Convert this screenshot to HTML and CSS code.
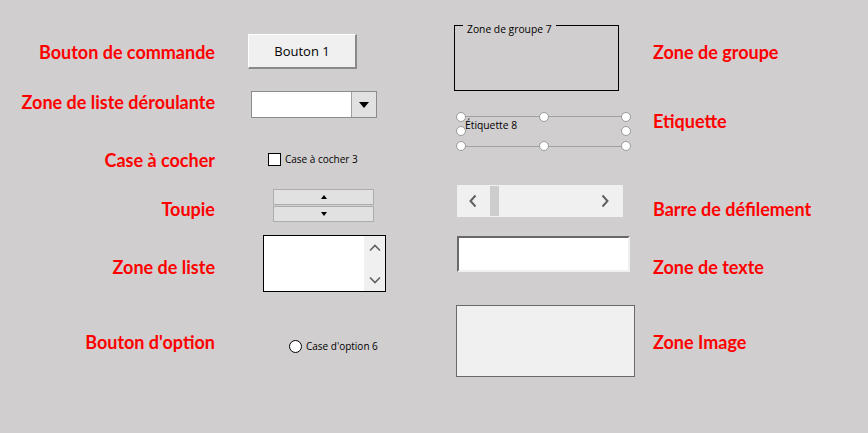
FILE: index.html
```html
<!DOCTYPE html>
<html>
<head>
<meta charset="utf-8">
<title>Contrôles de formulaire</title>
<link rel="stylesheet" href="styles.css">
</head>
<body>
<div class="sheet">
	<!-- libellés de gauche -->
	<div class="col col_left">
		<div class="lbl l1">Bouton de commande</div>
		<div class="lbl l2">Zone de liste déroulante</div>
		<div class="lbl l3">Case à cocher</div>
		<div class="lbl l4">Toupie</div>
		<div class="lbl l5">Zone de liste</div>
		<div class="lbl l6">Bouton d'option</div>
	</div>

	<!-- contrôles colonne 1 -->
	<div class="col col_ctrl1">
		<div class="btn_cmd">Bouton 1</div>
		<div class="combo">
			<div class="combo_field"></div>
			<div class="combo_btn"><span class="tri_down"></span></div>
		</div>
		<div class="check">
			<span class="check_box"></span>
			<span class="ctl_txt">Case à cocher 3</span>
		</div>
		<div class="spin">
			<div class="spin_btn"><span class="tri_up_s"></span></div>
			<div class="spin_btn"><span class="tri_down_s"></span></div>
		</div>
		<div class="listbox">
			<div class="listbox_area"></div>
			<div class="vscroll">
				<svg width="12" height="8" viewBox="0 0 12 8"><path d="M1 6.5 L6 1.5 L11 6.5" fill="none" stroke="#606060" stroke-width="1.6"/></svg>
				<svg width="12" height="8" viewBox="0 0 12 8"><path d="M1 1.5 L6 6.5 L11 1.5" fill="none" stroke="#606060" stroke-width="1.6"/></svg>
			</div>
		</div>
		<div class="option">
			<span class="radio"></span>
			<span class="ctl_txt">Case d'option 6</span>
		</div>
	</div>

	<!-- contrôles colonne 2 -->
	<div class="col col_ctrl2">
		<div class="groupbox"><span class="legend">Zone de groupe 7</span></div>
		<div class="label_ctl">
			<span class="lab_txt">Étiquette 8</span>
			<span class="hdl h_tl"></span>
			<span class="hdl h_tm"></span>
			<span class="hdl h_tr"></span>
			<span class="hdl h_ml"></span>
			<span class="hdl h_mr"></span>
			<span class="hdl h_bl"></span>
			<span class="hdl h_bm"></span>
			<span class="hdl h_br"></span>
		</div>
		<div class="hscroll">
			<svg width="10" height="14" viewBox="0 0 10 14"><path d="M7.5 1.5 L2.5 7 L7.5 12.5" fill="none" stroke="#606060" stroke-width="2"/></svg>
			<div class="hthumb"></div>
			<div class="hspace"></div>
			<svg width="10" height="14" viewBox="0 0 10 14"><path d="M2.5 1.5 L7.5 7 L2.5 12.5" fill="none" stroke="#606060" stroke-width="2"/></svg>
		</div>
		<div class="textbox"></div>
		<div class="imagebox"></div>
	</div>

	<!-- libellés de droite -->
	<div class="col col_right">
		<div class="lbl r1">Zone de groupe</div>
		<div class="lbl r2">Etiquette</div>
		<div class="lbl r3">Barre de défilement</div>
		<div class="lbl r4">Zone de texte</div>
		<div class="lbl r5">Zone Image</div>
	</div>
</div>
</body>
</html>
```

FILE: styles.css
```css
html, body {
	margin: 0;
	padding: 0;
	background: #D0CECE;
}
body {
	width: 868px;
	height: 433px;
	overflow: hidden;
	font-family: "Open Sans", "Noto Sans", sans-serif;
}
.sheet {
	display: flex;
	align-items: flex-start;
}
.col {
	display: flex;
	flex-direction: column;
	align-items: flex-start;
}

/* ---------- libellés rouges ---------- */
.lbl {
	color: #FF0000;
	font-family: Lato, "Open Sans", sans-serif;
	font-weight: bold;
	font-size: 18px;
	line-height: 20px;
	height: 20px;
	white-space: nowrap;
}
.col_left {
	width: 215px;
	align-items: flex-end;
	padding-top: 42px;
}
.l2 { margin-top: 30px; }
.l3 { margin-top: 38px; }
.l4 { margin-top: 29px; }
.l5 { margin-top: 38px; }
.l6 { margin-top: 55px; }

.col_right {
	padding-top: 42px;
	padding-left: 18px;
}
.r2 { margin-top: 49px; }
.r3 { margin-top: 68px; }
.r4 { margin-top: 38px; }
.r5 { margin-top: 55px; }

.ctl_txt {
	font-size: 10px;
	color: #000;
	white-space: nowrap;
}

/* ---------- colonne contrôles 1 ---------- */
.col_ctrl1 {
	width: 239px;
	padding-top: 34px;
}
.btn_cmd {
	margin-left: 33px;
	width: 106px;
	height: 32px;
	background: #F0F0F0;
	border-top: 1px solid #FFFFFF;
	border-left: 1px solid #FFFFFF;
	border-right: 2px solid #8A8A8A;
	border-bottom: 2px solid #8A8A8A;
	font-size: 13px;
	line-height: 32px;
	text-align: center;
}
.combo {
	margin-top: 22px;
	margin-left: 36px;
	width: 124px;
	height: 25px;
	display: flex;
	border: 1px solid #8C8C8C;
	background: #FFFFFF;
}
.combo_field {
	flex: 1;
}
.combo_btn {
	width: 24px;
	background: #E1E1E1;
	border-left: 1px solid #A0A0A0;
	display: flex;
	align-items: center;
	justify-content: center;
}
.tri_down {
	width: 0;
	height: 0;
	border-left: 5px solid transparent;
	border-right: 5px solid transparent;
	border-top: 6px solid #000;
}
.check {
	margin-top: 34px;
	margin-left: 53px;
	display: flex;
	align-items: center;
	gap: 4px;
	height: 14px;
}
.check_box {
	width: 11px;
	height: 11px;
	background: #FFFFFF;
	border: 1px solid #000;
}
.spin {
	margin-top: 23px;
	margin-left: 58px;
	width: 101px;
	display: flex;
	flex-direction: column;
	gap: 1px;
}
.spin_btn {
	height: 14px;
	background: #E1E1E1;
	border: 1px solid #ADADAD;
	display: flex;
	align-items: center;
	justify-content: center;
}
.tri_up_s, .tri_down_s {
	width: 0;
	height: 0;
	border-left: 3px solid transparent;
	border-right: 3px solid transparent;
}
.tri_up_s { border-bottom: 4px solid #000; }
.tri_down_s { border-top: 4px solid #000; }
.listbox {
	margin-top: 13px;
	margin-left: 48px;
	width: 121px;
	height: 55px;
	border: 1px solid #000;
	background: #FFFFFF;
	display: flex;
}
.listbox_area {
	flex: 1;
}
.vscroll {
	width: 21px;
	background: #F0F0F0;
	display: flex;
	flex-direction: column;
	align-items: center;
	justify-content: space-between;
	padding: 8px 0 7px;
	box-sizing: border-box;
}
.option {
	margin-top: 47px;
	margin-left: 74px;
	display: flex;
	align-items: center;
	gap: 4px;
	height: 14px;
}
.radio {
	width: 11px;
	height: 11px;
	border-radius: 50%;
	background: #FFFFFF;
	border: 1px solid #000;
}

/* ---------- colonne contrôles 2 ---------- */
.col_ctrl2 {
	width: 181px;
	padding-top: 25px;
}
.groupbox {
	width: 163px;
	height: 64px;
	border: 1px solid #000;
	position: relative;
}
.legend {
	position: absolute;
	top: -4px;
	left: 8px;
	padding: 0 4px;
	background: #D0CECE;
	font-size: 10.3px;
	line-height: 14px;
}
.label_ctl {
	margin-top: 25px;
	margin-left: 7px;
	width: 165px;
	height: 29px;
	border-top: 1px solid #A0A0A0;
	border-bottom: 1px solid #A0A0A0;
	position: relative;
}
.lab_txt {
	position: absolute;
	left: 4px;
	top: 1px;
	font-size: 10.3px;
	line-height: 14px;
}
.hdl {
	position: absolute;
	width: 8px;
	height: 8px;
	border-radius: 50%;
	background: #FFFFFF;
	border: 1px solid #999;
}
.h_tl { left: -5px; top: -5px; }
.h_tm { left: 78px; top: -5px; }
.h_tr { left: 160px; top: -5px; }
.h_ml { left: -5px; top: 9px; }
.h_mr { left: 160px; top: 9px; }
.h_bl { left: -5px; top: 24px; }
.h_bm { left: 78px; top: 24px; }
.h_br { left: 160px; top: 24px; }
.hscroll {
	margin-top: 38px;
	margin-left: 3px;
	width: 166px;
	height: 32px;
	background: #F0F0F0;
	display: flex;
	align-items: center;
	box-sizing: border-box;
	padding: 0 13px 0 11px;
}
.hthumb {
	width: 9px;
	height: 30px;
	background: #CDCDCD;
	margin-left: 12px;
}
.hspace {
	flex: 1;
}
.textbox {
	margin-top: 19px;
	margin-left: 3px;
	width: 169px;
	height: 32px;
	background: #FFFFFF;
	border-top: 2px solid #696969;
	border-left: 2px solid #696969;
	border-right: 2px solid #F0F0F0;
	border-bottom: 2px solid #F0F0F0;
}
.imagebox {
	margin-top: 33px;
	margin-left: 2px;
	width: 177px;
	height: 70px;
	background: #F0F0F0;
	border: 1px solid #696969;
}
```
